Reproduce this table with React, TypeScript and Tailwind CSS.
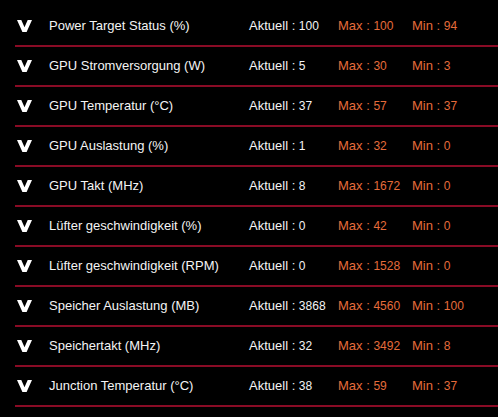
import React from 'react';

interface Sensor {
  label: string;
  current: number;
  max: number;
  min: number;
}

const sensors: Sensor[] = [
  { label: 'Power Target Status (%)', current: 100, max: 100, min: 94 },
  { label: 'GPU Stromversorgung (W)', current: 5, max: 30, min: 3 },
  { label: 'GPU Temperatur (°C)', current: 37, max: 57, min: 37 },
  { label: 'GPU Auslastung (%)', current: 1, max: 32, min: 0 },
  { label: 'GPU Takt (MHz)', current: 8, max: 1672, min: 0 },
  { label: 'Lüfter geschwindigkeit (%)', current: 0, max: 42, min: 0 },
  { label: 'Lüfter geschwindigkeit (RPM)', current: 0, max: 1528, min: 0 },
  { label: 'Speicher Auslastung (MB)', current: 3868, max: 4560, min: 100 },
  { label: 'Speichertakt (MHz)', current: 32, max: 3492, min: 8 },
  { label: 'Junction Temperatur (°C)', current: 38, max: 59, min: 37 },
];

const Chevron = () => (
  <svg width="15" height="12" viewBox="0 0 15 12" className="shrink-0">
    <polygon points="0,0 4.3,0 7.5,7.2 10.7,0 15,0 9.6,12 5.4,12" fill="#ffffff" />
  </svg>
);

const SensorRow: React.FC<{ sensor: Sensor }> = ({ sensor }) => (
  <div className="ml-[15px] h-10 border-b-2 border-[#8a0b25] flex items-center">
    <div className="w-[34px] pl-[2px] flex items-center">
      <Chevron />
    </div>
    <div className="w-[200px] text-[13px] text-[#f4f4f4]">{sensor.label}</div>
    <div className="w-[89px] text-[13px] text-[#f4f4f4]">
      Aktuell : <span className="text-[12px]">{sensor.current}</span>
    </div>
    <div className="w-[74px] text-[13px] text-[#e56c3b]">
      Max : <span className="text-[12px]">{sensor.max}</span>
    </div>
    <div className="text-[13px] text-[#e56c3b]">
      Min : <span className="text-[12px]">{sensor.min}</span>
    </div>
  </div>
);

export default function App() {
  return (
    <div
      className="w-[498px] h-[417px] bg-black pt-[7px] overflow-hidden"
      style={{ fontFamily: '"Liberation Sans", Arial, sans-serif' }}
    >
      {sensors.map((s) => (
        <SensorRow key={s.label} sensor={s} />
      ))}
    </div>
  );
}
